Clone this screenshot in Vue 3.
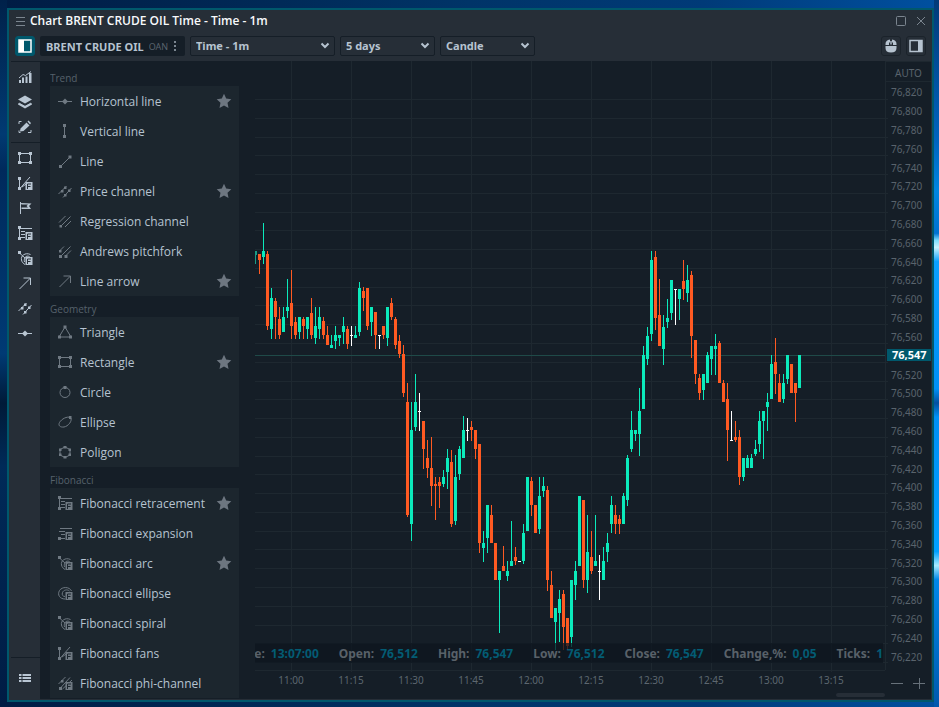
<script setup>
import { ref } from 'vue'

// Each glyph: s = stroked outline, f = filled parts, c = lines cut out of the filled parts
const fibBadge = 'M8.5 7h7v8h-7z'
const fibCut = 'M10.5 14V9H14M10.5 11.5H13.5'
const glyphs = {
  hline: { s: 'M1 8.5H15', f: 'M8 5.5L11 8.5L8 11.5L5 8.5Z' },
  vline: { s: 'M7.5 2V14', f: 'M6 1h3v3h-3zM6 12h3v3h-3z' },
  line: { s: 'M3.5 13.5L12.5 4.5', f: 'M2 12h3v3h-3zM11.5 2.5h3v3h-3z' },
  channel: { s: 'M1.5 11L9.500 3M6 14.500L14.500 5', f: 'M4 7h2.500v2.500h-2.500zM7 3.500h2.500v2.500h-2.500zM7 11h2.500v2.500h-2.500zM11 6.500h2.500v2.500h-2.500z' },
  regression: { s: 'M2 9.5L8.5 3M3.5 13.5L13.5 3.5M8 14L14 8', f: 'M2.5 12h2.5v2.5h-2.5z' },
  pitchfork: { s: 'M2.5 8L7 3.5M3.5 13.5L13.5 3.5M8.5 13L14 7.5', f: 'M2 7h2.5v2.5h-2.5zM2 12h3v3h-3zM7.5 12h3v3h-3z' },
  arrow: { s: 'M2.5 14L13.5 3M6.5 3H13.5V10', f: '' },
  triangle: { s: 'M8 3L14 13H2Z', f: 'M6.5 1.5h3v3h-3zM1 11.5h3v3h-3zM12 11.5h3v3h-3z' },
  rect: { s: 'M2.5 3.5H13.5V12.5H2.5Z', f: 'M1 2h3v3h-3zM12 2h3v3h-3zM1 11h3v3h-3zM12 11h3v3h-3z' },
  circle: { s: 'M3 8.5a5 5 0 1 0 10 0a5 5 0 1 0 -10 0Z', f: 'M6.5 2h3v3h-3z' },
  ellipse: { s: 'M13.5 3.5C16 6.5 11 12.5 7 13C3 13.5 1 11.5 2.5 8.5C4.500 5 10 2 13.5 3.500Z', f: 'M12 2h2.500v3h-2.500z' },
  polygon: { s: 'M8 3L13 5.500V11L8 13.500L3 11V5.500Z', f: 'M6.500 2h3v2.500h-3zM6.500 12h3v2.500h-3zM2 4.500h2.500v2.500h-2.500zM11.500 4.500h2.500v2.500h-2.500zM2 9.500h2.500v2.500h-2.500zM11.500 9.500h2.500v2.500h-2.500z' },
  retrace: { s: 'M2.5 2V14M2.5 3.5H15M4 6.500H8M4 9.500H8M4 12.500H8', f: 'M1 1h3v3h-3zM1 12h3v3h-3z' + fibBadge, c: fibCut },
  expand: { s: 'M3 3.500H15M2 6.500H8M4 9.500H8M2 13.500H8', f: 'M1 12h3v3h-3z' + fibBadge, c: fibCut },
  arc: { s: 'M2.500 3L8 8M13.500 4.500C8 2 3.500 6 4.500 10C5 12.500 6.500 13.500 8 14.500M12.500 6.500C9 5 6.500 8 7.500 12', f: 'M1 1h3v3h-3z' + fibBadge, c: fibCut },
  fibEllipse: { s: 'M14.500 6C12.500 1.500 5 1.500 2.500 5.500C0 10 3 14 8 14M12.500 6C10 4 6.500 5 5.500 7.500C4.500 10 6 11.500 8 11.500', f: fibBadge, c: fibCut },
  fans: { s: 'M2.500 3V13M3 13.500L13 2M5 12L9 9', f: 'M1 2h3v3h-3zM1 12h3v3h-3z' + fibBadge, c: fibCut },
  phi: { s: 'M1.500 9L8.500 2M3 13.500L13 2.500M5.500 14L15 5', f: 'M4 5h2.500v2.500h-2.500zM2 12h3v3h-3z' + fibBadge, c: fibCut },
  bars: { s: 'M2 9L6 5.500L8.500 6.500L14 2.500', f: 'M2 11h2v3h-2zM5 8.500h2v5.500h-2zM8.500 7.500h2v6.500h-2zM12 4h2.500v10h-2.500z' },
  layers: { s: 'M2 9L8 12.500L14 9', f: 'M8 1.500L15 5.500L8 9.500L1 5.500ZM1.500 9L8 12L14.500 9L15 10.500L8 14.500L1 10.500Z' },
  pen: { s: 'M2 5V2.500H4.500M14 11V13.500H11M2 11.500V13.500H3.500', f: 'M3.500 9.500L9.500 3.500L12.500 6.500L6.500 12L3 12.500ZM10.500 2.500L11.500 1.500L14 4L13 5.500Z' },
  flag: { s: 'M3.500 2V14', f: 'M3.500 3L14.500 3.500L12 6L14 9H4.500V7.500H11L9.500 6L11 4.500H4.500Z' },
  list: { s: '', f: 'M2 4h2.500v2h-2.500zM5.500 4h8.500v2h-8.500zM2 7h2.500v2h-2.500zM5.500 7h8.500v2h-8.500zM2 10h2.500v2h-2.500zM5.500 10h8.500v2h-8.500z' },
}

const rail = [
  [['bars', 'Indicators'], ['layers', 'Layers'], ['pen', 'Drawing tools']],
  [
    ['rect', 'Rectangle'], ['fans', 'Fibonacci fans'], ['flag', 'Flag'], ['retrace', 'Fibonacci retracement'],
    ['arc', 'Fibonacci arc'], ['arrow', 'Line arrow'], ['channel', 'Price channel'], ['hline', 'Horizontal line'],
  ],
]

const sections = [
  {
    title: 'Trend',
    tools: [
      ['hline', 'Horizontal line', true], ['vline', 'Vertical line'], ['line', 'Line'], ['channel', 'Price channel', true],
      ['regression', 'Regression channel'], ['pitchfork', 'Andrews pitchfork'], ['arrow', 'Line arrow', true],
    ],
  },
  {
    title: 'Geometry',
    tools: [
      ['triangle', 'Triangle'], ['rect', 'Rectangle', true], ['circle', 'Circle'], ['ellipse', 'Ellipse'], ['polygon', 'Poligon'],
    ],
  },
  {
    title: 'Fibonacci',
    tools: [
      ['retrace', 'Fibonacci retracement', true], ['expand', 'Fibonacci expansion'], ['arc', 'Fibonacci arc', true],
      ['fibEllipse', 'Fibonacci ellipse'], ['arc', 'Fibonacci spiral'], ['fans', 'Fibonacci fans'], ['phi', 'Fibonacci phi-channel'],
    ],
  },
]

const period = ref('Time - 1m')
const range = ref('5 days')
const style = ref('Candle')

const prices = Array.from({ length: 31 }, (_, i) => 76820 - i * 20)
const asPrice = (n) => `${Math.floor(n / 1000)},${String(n % 1000).padStart(3, '0')}`
const times = ['11:00', '11:15', '11:30', '11:45', '12:00', '12:15', '12:30', '12:45', '13:00', '13:15']
const gridY = prices.map((_, i) => Math.round(38 + i * 18.77))

const quote = [
  ['Time:', '13:07:00'], ['Open:', '76,512'], ['High:', '76,547'], ['Low:', '76,512'],
  ['Close:', '76,547'], ['Change,%:', '0,05'], ['Ticks:', '1'],
]

// direction (u up, d down, n flat), wick top, body top, body bottom, wick bottom
const STEP = 4
const TOP = 61
const bars = `
d254,254,260,274 u223,251,257,264 d251,254,326,330 u288,298,329,339 d298,301,317,339 d307,319,335,339
u307,317,332,332 u279,307,311,318 d270,303,326,339 d317,322,335,339 u317,317,332,339 d317,319,326,339
u317,317,329,339 d298,313,335,339 u307,326,338,344 u307,317,329,339 d317,321,335,339 d326,335,345,345
u335,345,348,348 u326,335,341,349 u335,335,338,346 u317,326,332,344 d326,329,344,349 n326,335,336,346
u326,335,338,338 u282,288,332,336 d287,291,298,311 d288,288,326,330 u307,307,322,336 d312,312,335,349
n335,335,336,349 d326,326,335,339 u307,307,338,346 d298,303,317,320 d317,319,345,349 d335,341,354,358
d345,354,393,397 d383,402,515,517 u402,430,524,541 u374,402,427,431 n393,411,412,431 d421,421,449,469
d440,458,468,478 d437,468,486,506 d477,484,486,520 d477,482,486,508 u470,477,484,487 u449,458,472,489
d450,462,524,527 u455,477,521,525 u446,449,474,480 u416,430,458,458 n418,430,431,441 d421,427,430,441
d430,430,449,459 d444,444,543,553 u531,543,548,562 u505,505,538,553 d505,515,543,543 d543,543,580,580
u571,571,580,633 d546,566,571,571 u561,571,576,581 u521,561,566,566 d547,557,561,565 n561,561,562,562
u524,533,561,564 u477,477,531,531 d477,481,505,516 d505,505,533,533 u477,496,529,534 u477,486,491,497
d486,490,580,591 d571,585,618,618 u608,608,622,650 u590,599,613,642 d590,594,627,650 d618,618,646,650
u580,580,637,647 u561,571,585,600 u496,496,566,566 d500,500,580,588 u515,552,580,593 d531,557,571,574
u515,561,566,566 n555,571,572,600 u547,561,580,580 u533,543,552,562 u496,505,524,533 d505,515,524,534
d515,519,524,534 u493,496,524,524 u455,458,500,506 u411,430,449,452 u430,430,434,441 u388,411,434,456
u346,355,409,409 u327,336,359,365 u251,260,334,341 d251,257,318,330 d279,315,346,346 u315,327,349,365
u299,318,322,328 u280,280,313,320 n289,289,290,325 u289,289,299,320 d260,281,289,300 u265,280,293,302
d271,275,336,358 d340,340,374,384 d374,378,393,400 u374,374,390,400 u352,355,383,383 u346,346,359,375
u334,346,349,375 d341,343,383,383 d380,383,402,402 d383,399,430,461 n411,440,441,441 d421,437,440,442
d430,437,477,485 u458,458,477,481 u455,458,468,468 u454,458,468,468 u440,449,454,456 u411,421,444,452
u411,411,421,459 u393,402,407,431 u355,364,399,399 d338,362,374,394 d374,383,402,402 u374,383,399,403
u355,355,379,384 d364,364,393,393 d383,383,393,422 u355,355,388,388`
const candles = bars.trim().split(/\s+/).map((entry, i) => {
  const [high, open, close, low] = entry.slice(1).split(',').map((v) => v - TOP)
  return { dir: entry[0], x: 4 + i * STEP, high, open, close, low }
})
</script>

<template>
  <div class="desktop">
    <main class="window">
      <header class="titlebar">
        <button class="plain menu" aria-label="Menu">
          <svg width="10" height="9"><path d="M0 .5H9M0 4.5H9M0 8.500H9" class="thin" /></svg>
        </button>
        <h1>Chart BRENT CRUDE OIL Time - Time - 1m</h1>
        <button class="plain" aria-label="Maximize">
          <svg width="11" height="11"><rect x="1.500" y=".5" width="9" height="9" rx="1" class="thin" /></svg>
        </button>
        <button class="plain" aria-label="Close">
          <svg width="10" height="10"><path d="M1 1L9 9M9 1L1 9" class="thin" /></svg>
        </button>
      </header>

      <div class="toolbar">
        <button class="square active" aria-label="Toggle left panel">
          <svg width="14" height="14"><path d="M1 1H13V13H1Z" class="frame" /><path d="M1 1H6V13H1Z" class="solid" /></svg>
        </button>
        <button class="symbol">
          <strong>BRENT CRUDE OIL</strong><small>OAN</small>
          <svg width="4" height="12"><path d="M1 1h2v2h-2zM1 5h2v2h-2zM1 9h2v2h-2z" class="solid" /></svg>
        </button>
        <label class="pick wide">
          <select v-model="period" aria-label="Period"><option>Time - 1m</option></select>
          <svg width="10" height="8"><path d="M1.500 1.500L5 5L8.500 1.500" class="chev" /></svg>
        </label>
        <label class="pick">
          <select v-model="range" aria-label="Range"><option>5 days</option></select>
          <svg width="10" height="8"><path d="M1.500 1.500L5 5L8.500 1.500" class="chev" /></svg>
        </label>
        <label class="pick">
          <select v-model="style" aria-label="Chart style"><option>Candle</option></select>
          <svg width="10" height="8"><path d="M1.500 1.500L5 5L8.500 1.500" class="chev" /></svg>
        </label>
        <span class="spacer"></span>
        <button class="square" aria-label="Mouse mode">
          <svg width="12" height="14">
            <path d="M.5 6V5Q.5 1 5 .5V3.500H4V6ZM11.500 6V5Q11.500 1 7 .5V3.500H8V6ZM5.300 2h1.400v3.500h-1.400zM.5 7H11.500V9Q11.500 13.500 6 13.500Q.5 13.500 .5 9Z" class="solid" />
          </svg>
        </button>
        <button class="square" aria-label="Toggle right panel">
          <svg width="14" height="14"><path d="M1 1.500H13V12.500H1Z" class="frame" /><path d="M9 1H13V13H9Z" class="solid" /></svg>
        </button>
      </div>

      <div class="body">
        <nav class="rail">
          <div v-for="(group, g) in rail" :key="g" class="group">
            <button v-for="[icon, name] in group" :key="name" :aria-label="name">
              <svg class="glyph" viewBox="0 0 16 16">
                <path :d="glyphs[icon].s" class="s" /><path :d="glyphs[icon].f" class="f" /><path v-if="glyphs[icon].c" :d="glyphs[icon].c" class="c" />
              </svg>
            </button>
          </div>
          <div class="group last">
            <button aria-label="Object list">
              <svg class="glyph" viewBox="0 0 16 16"><path :d="glyphs.list.f" class="f" /></svg>
            </button>
          </div>
        </nav>

        <aside class="tools">
          <section v-for="section in sections" :key="section.title">
            <h2>{{ section.title }}</h2>
            <ul>
              <li v-for="[icon, name, starred] in section.tools" :key="name">
                <button>
                  <svg class="glyph" viewBox="0 0 16 16">
                    <path :d="glyphs[icon].s" class="s" /><path :d="glyphs[icon].f" class="f" /><path v-if="glyphs[icon].c" :d="glyphs[icon].c" class="c" />
                  </svg>
                  <span>{{ name }}</span>
                  <svg v-if="starred" class="star" viewBox="0 0 16 16">
                    <path d="M8 .8L10.200 5.600L15.300 6.200L11.500 9.800L12.500 15L8 12.500L3.500 15L4.500 9.800L.7 6.200L5.800 5.600Z" />
                  </svg>
                </button>
              </li>
            </ul>
          </section>
        </aside>

        <div class="chart">
          <div class="plot">
            <svg class="canvas" width="100%" height="100%">
              <g class="grid">
                <rect v-for="y in gridY" :key="y" x="0" :y="y" width="100%" height="1" />
                <rect v-for="(t, i) in times" :key="t" :x="36 + i * 60" y="0" width="1" height="100%" />
                <rect x="0" y="609" width="100%" height="1" />
                <svg x="100%" class="edge">
                  <rect x="0" y="0" width="1" height="609" />
                  <rect v-for="y in gridY" :key="y" x="0" :y="y" width="3" height="1" />
                </svg>
              </g>
              <rect class="now" x="0" y="294" width="100%" height="1" />
              <path class="partial" d="M0 190h2v4h-1v9h-1z" />
              <g v-for="c in candles" :key="c.x" :class="c.dir">
                <rect :x="c.x" :y="c.high" width="1" :height="c.low - c.high" />
                <rect :x="c.x - 1" :y="c.open" width="3" :height="c.close - c.open" />
              </g>
            </svg>
            <dl class="quote">
              <div v-for="[name, value] in quote" :key="name"><dt>{{ name }}</dt><dd>{{ value }}</dd></div>
            </dl>
          </div>
          <div class="times"><span v-for="t in times" :key="t">{{ t }}</span></div>
          <div class="scroll"></div>
        </div>

        <div class="axis">
          <button class="auto">AUTO</button>
          <ol>
            <li v-for="p in prices" :key="p" :class="{ current: p === 76540 }">{{ p === 76540 ? '76,547' : asPrice(p) }}</li>
          </ol>
          <div class="zoom">
            <button class="plain" aria-label="Zoom out"><svg width="12" height="12"><path d="M0 6.500H12" class="thin" /></svg></button>
            <button class="plain" aria-label="Zoom in"><svg width="12" height="12"><path d="M0 6.500H12M6.500 1V12" class="thin" /></svg></button>
          </div>
        </div>
      </div>
    </main>
  </div>
</template>

<style>
body { margin: 0; background: #00214d; }
</style>

<style scoped>
* { box-sizing: border-box; }
.desktop {
  height: 100vh;
  padding: 8px 5px 5px 7px;
  font: 12px "Noto Sans", "Open Sans", sans-serif;
  color: #b6c3d0;
  background:
    linear-gradient(#013a78, #0064bf 20%, #0086e0 27%, #0072d0 33%, #7fe0ff 34%, #c8f4ff 35%, #0aa0ff 37%, #0090f5 55%, #0450a0 57%, #0090f5 59%, #00a0ff 78%, #a8ecff 80%, #0088ea 82%, #0058ac) right / 5px 100% no-repeat,
    linear-gradient(#00214a, #013a72 19%, #002a5c 24%, #003a74 50%, #001a38 57%, #002a58 66%, #001c44) left / 7px 100% no-repeat,
    linear-gradient(90deg, #001c44, #002a58 30%, #003468 50%, #003a78 75%, #0050a0);
}
.window {
  display: flex;
  flex-direction: column;
  height: 100%;
  padding: 0 1px 1px 2px;
  border: 2px solid #00586c;
  background: #262e37;
}
button, select { font: inherit; color: inherit; border: 0; background: none; padding: 0; margin: 0; }
button { display: flex; align-items: center; justify-content: center; cursor: pointer; }
svg { display: block; flex: none; }
.solid { fill: currentColor; }
.frame { fill: none; stroke: currentColor; stroke-width: 1.500; }
.thin { fill: none; stroke: currentColor; }
.chev { fill: none; stroke: currentColor; stroke-width: 2; }

.titlebar { display: flex; align-items: center; gap: 9px; height: 22px; padding: 0 5px 0 4px; color: #7b858f; }
.titlebar h1 { flex: 1; margin: 0 0 0 -5px; font-family: "Open Sans", sans-serif; font-size: 12px; line-height: 22px; font-weight: 600; color: #f8fafc; white-space: nowrap; }
.titlebar .plain { width: 11px; height: 22px; }

.toolbar { display: flex; gap: 5px; padding: 4px 5px 5px 4px; }
.square { width: 20px; height: 20px; border: 1px solid #1b232b; border-radius: 3px; }
.square.active { background: #00586c; border-color: #00586c; color: #fff; }
.symbol { gap: 5px; width: 145px; height: 20px; padding: 0 8px 0 6px; background: #151e27; border-radius: 2px; }
.symbol svg { color: #7b8690; }
.symbol strong { font-size: 11px; white-space: nowrap; }
.symbol small { flex: 1; font-size: 9px; color: #59636d; overflow: hidden; text-align: left; }
.pick { display: grid; align-items: center; width: 95px; height: 20px; }
.pick.wide { width: 145px; }
.pick select { grid-area: 1 / 1; width: 100%; height: 20px; padding: 0 20px 1px 5px; appearance: none; border: 1px solid #151e27; border-radius: 2px; font-size: 11px; font-weight: 700; }
.pick svg { grid-area: 1 / 1; justify-self: end; margin-right: 5px; pointer-events: none; }
.spacer { flex: 1; }

.body { flex: 1; min-height: 0; display: grid; grid-template-columns: 29px 189px minmax(0, 1fr) 46px; background: #151e27; }
.rail { display: flex; flex-direction: column; min-height: 0; background: #262e37; border-top: 1px solid #151e27; }
.group { padding: 2px 0 3px; }
.group + .group { padding-top: 2px; border-top: 1px solid #151e27; }
.rail button { width: 28px; height: 25px; color: #b9c6d3; }
.last.group { margin-top: auto; padding: 7px 0 9px; }
.glyph { width: 16px; height: 16px; }
.s { fill: none; stroke: currentColor; }
.f { fill: currentColor; }
.c { fill: none; stroke: #262e37; }

.tools { margin-left: 10px; margin-right: -10px; padding-top: 4px; overflow: hidden; font-family: "Open Sans", sans-serif; }
.tools h2 { margin: 0; padding-top: 5px; font-size: 10px; line-height: 16px; font-weight: 400; color: #56616b; }
.tools ul { margin: 0; padding: 0; list-style: none; background: #1c262e; }
.tools button { width: 100%; height: 30px; padding: 0 7px; gap: 7px; }
.tools span { flex: 1; text-align: left; white-space: nowrap; }
.tools .glyph { color: #6f7982; }
.tools .c { stroke: #1c262e; }
.star { width: 16px; height: 16px; fill: #6d7680; }

.chart { display: flex; flex-direction: column; min-width: 0; min-height: 0; margin-left: 26px; }
.plot { position: relative; flex: 1; min-height: 0; }
.canvas, .edge { overflow: visible; }
.grid { fill: #1e2830; }
.now { fill: #1f4a48; }
.partial { fill: #1a9c86; }
.u { fill: #0beabb; }
.d { fill: #ff5a22; }
.n { fill: #fff; }
.quote {
  position: absolute; left: 0; right: 2px; bottom: 9px; height: 20px; margin: 0;
  display: flex; justify-content: flex-end; align-items: center; gap: 20px; overflow: hidden;
  font-weight: 700; color: #596169; white-space: nowrap; background: rgba(13, 22, 31, 0.75);
}
.quote div { display: flex; gap: 6px; }
.quote dd { margin: 0; color: #035c74; }
.times { display: flex; height: 17px; padding-left: 6px; font-size: 10px; line-height: 17px; color: #5c666f; }
.times span { flex: none; width: 60px; text-align: center; }
.scroll { align-self: flex-end; width: 49px; height: 4px; margin: 4px 0 2px; border-radius: 2px; background: #262e37; }

.axis { display: flex; flex-direction: column; min-height: 0; font-size: 10px; color: #59636c; }
.auto { height: 21px; padding-top: 3px; border-bottom: 1px solid #1e2830; border-top: 1px solid #1e2830; margin-left: 1px; }
.axis ol { flex: 1; display: flex; flex-direction: column; margin: 0; padding: 1px 0 0; list-style: none; }
.axis li { flex: 1; display: flex; align-items: center; padding-left: 6px; }
.axis .current { flex: 0 0 12px; margin: 3px 0 4px 2px; padding-left: 5px; font-size: 11px; line-height: 12px; font-weight: 700; color: #fff; background: #00586c; }
.zoom { display: flex; justify-content: space-between; height: 33px; padding: 0 6px; color: #67717a; }
</style>
